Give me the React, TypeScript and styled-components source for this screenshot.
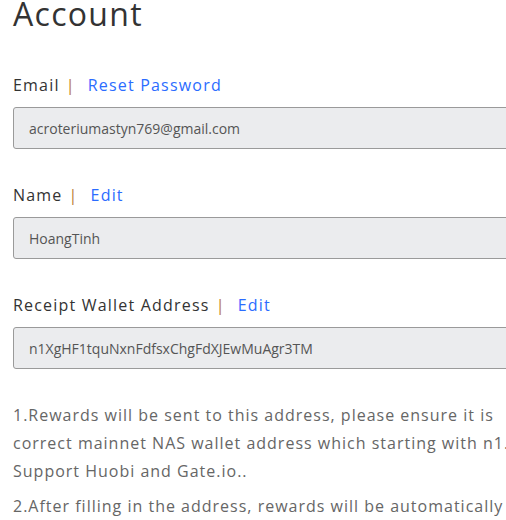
import React from "react";
import styled, { createGlobalStyle } from "styled-components";

const Global = createGlobalStyle`
  html, body { margin: 0; padding: 0; background: #fff; overflow: hidden; }
  body { font-family: "Open Sans", "Noto Sans", sans-serif; }
`;

const Page = styled.div`
  width: 530px;
  padding: 0 0 0 13px;
`;

const Title = styled.h1`
  margin: -2px 0 0;
  font-size: 32px;
  line-height: 32px;
  font-weight: 400;
  color: #333;
  letter-spacing: 1.3px;
`;

const Section = styled.div`
  display: flex;
  flex-direction: column;
  margin-top: ${(p: { $first?: boolean }) => (p.$first ? "43px" : "34px")};
`;

const LabelRow = styled.div`
  display: flex;
  align-items: center;
  font-size: 16px;
  line-height: 24px;
  letter-spacing: 1.2px;
  color: #333;
  height: 24px;
  margin-bottom: 10px;
`;

const Sep = styled.span`
  color: #b87833;
  margin: 0 12px 0 6px;
`;

const Link = styled.a`
  color: #2b6cff;
  text-decoration: none;
  cursor: pointer;
`;

const Field = styled.div`
  box-sizing: border-box;
  height: 42px;
  border: 1px solid #9a9a9a;
  border-radius: 3px;
  background: #ebecee;
  display: flex;
  align-items: center;
  padding-left: 15px;
  font-size: 14px;
  color: #555;
`;

const Notes = styled.div`
  margin-top: 32px;
  width: 530px;
  color: #666;
  font-size: 16px;
  letter-spacing: 1px;
  line-height: 28px;
`;

const Note = styled.p`
  margin: 0 0 7px;
`;

export default function App() {
  return (
    <>
      <Global />
      <Page>
        <Title>Account</Title>
        <Section $first>
          <LabelRow>
            Email<Sep>|</Sep>
            <Link>Reset Password</Link>
          </LabelRow>
          <Field>acroteriumastyn769@gmail.com</Field>
        </Section>
        <Section>
          <LabelRow>
            Name<Sep>|</Sep>
            <Link>Edit</Link>
          </LabelRow>
          <Field>HoangTinh</Field>
        </Section>
        <Section>
          <LabelRow>
            Receipt Wallet Address<Sep>|</Sep>
            <Link>Edit</Link>
          </LabelRow>
          <Field>n1XgHF1tquNxnFdfsxChgFdXJEwMuAgr3TM</Field>
        </Section>
        <Notes>
          <Note>
            1.Rewards will be sent to this address, please ensure it is correct
            mainnet NAS wallet address which starting with n1. Support Huobi and
            Gate.io..
          </Note>
          <Note>
            2.After filling in the address, rewards will be automatically sent
            to this address.
          </Note>
        </Notes>
      </Page>
    </>
  );
}
